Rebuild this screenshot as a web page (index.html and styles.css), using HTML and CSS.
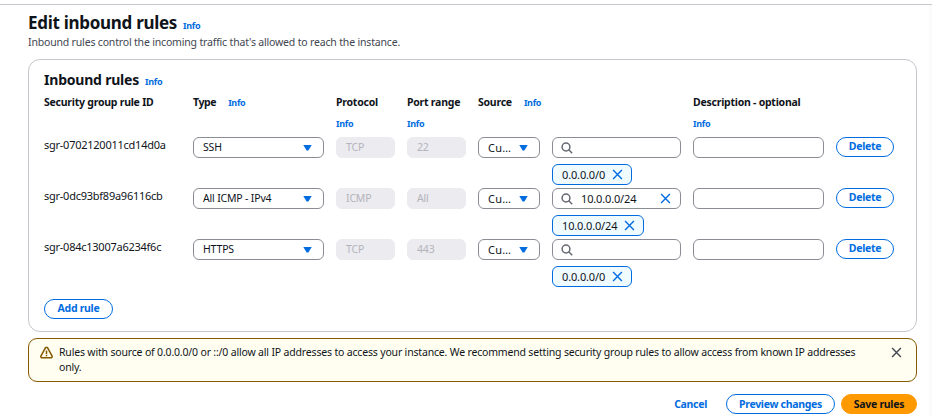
FILE: index.html
```html
<!DOCTYPE html>
<html lang="en">
<head>
<meta charset="utf-8">
<title>Edit inbound rules</title>
<link rel="stylesheet" href="styles.css">
</head>
<body>
<svg class="defs" aria-hidden="true">
  <symbol id="search" viewBox="0 0 12 12"><circle cx="5" cy="5" r="3.9"/><path d="M7.8 7.8 11.2 11.2"/></symbol>
  <symbol id="close" viewBox="0 0 12 12"><path d="M1.2 1.2 10.8 10.8M10.8 1.2 1.2 10.8"/></symbol>
  <symbol id="warn" viewBox="0 0 12 12"><path d="M5.2 1.3H6.8L11.3 9.6 10.8 10.9H1.2L.7 9.6Z"/><path d="M6 4.2V7.3M6 8.1V9.4"/></symbol>
</svg>
<main class="page">
  <header class="page-head">
    <div class="title"><h1>Edit inbound rules</h1><a class="info">Info</a></div>
    <p>Inbound rules control the incoming traffic that's allowed to reach the instance.</p>
  </header>
  <section class="panel">
    <div class="title"><h2>Inbound rules</h2><a class="info">Info</a></div>
    <div class="grid heads">
      <div class="head"><b>Security group rule ID</b></div>
      <div class="head"><b class="type">Type</b><a class="info">Info</a></div>
      <div class="head"><b>Protocol</b><a class="info">Info</a></div>
      <div class="head"><b>Port range</b><a class="info">Info</a></div>
      <div class="head wide"><b>Source</b><a class="info">Info</a></div>
      <div class="head"><b class="desc">Description - optional</b><a class="info">Info</a></div>
    </div>
    <div class="grid rule">
      <span class="id">sgr-0702120011cd14d0a</span>
      <div class="field select"><span>SSH</span><i class="caret"></i></div>
      <div class="field off">TCP</div>
      <div class="field off">22</div>
      <div class="field select"><span class="cut">Cu…</span><i class="caret"></i></div>
      <div class="source">
        <div class="field search"><svg class="lens"><use href="#search"/></svg></div>
        <div class="token"><span class="ip">0.0.0.0/0</span><svg class="x"><use href="#close"/></svg></div>
      </div>
      <div class="field"></div>
      <button class="btn">Delete</button>
    </div>
    <div class="grid rule">
      <span class="id">sgr-0dc93bf89a96116cb</span>
      <div class="field select"><span>All ICMP - IPv4</span><i class="caret"></i></div>
      <div class="field off">ICMP</div>
      <div class="field off">All</div>
      <div class="field select"><span class="cut">Cu…</span><i class="caret"></i></div>
      <div class="source">
        <div class="field search"><svg class="lens"><use href="#search"/></svg><span class="ip">10.0.0.0/24</span><svg class="x"><use href="#close"/></svg></div>
        <div class="token"><span class="ip">10.0.0.0/24</span><svg class="x"><use href="#close"/></svg></div>
      </div>
      <div class="field"></div>
      <button class="btn">Delete</button>
    </div>
    <div class="grid rule">
      <span class="id">sgr-084c13007a6234f6c</span>
      <div class="field select"><span>HTTPS</span><i class="caret"></i></div>
      <div class="field off">TCP</div>
      <div class="field off">443</div>
      <div class="field select"><span class="cut">Cu…</span><i class="caret"></i></div>
      <div class="source">
        <div class="field search"><svg class="lens"><use href="#search"/></svg></div>
        <div class="token"><span class="ip">0.0.0.0/0</span><svg class="x"><use href="#close"/></svg></div>
      </div>
      <div class="field"></div>
      <button class="btn">Delete</button>
    </div>
    <button class="btn add">Add rule</button>
  </section>
  <div class="alert">
    <svg class="warn"><use href="#warn"/></svg>
    <p>Rules with source of 0.0.0.0/0 or ::/0 allow all IP addresses to access your instance. We recommend setting security group rules to allow access from known IP addresses<br>only.</p>
    <svg class="x dismiss"><use href="#close"/></svg>
  </div>
  <footer>
    <button class="btn link">Cancel</button>
    <button class="btn preview">Preview changes</button>
    <button class="btn save">Save rules</button>
  </footer>
</main>
</body>
</html>
```
FILE: styles.css
```css
* { box-sizing: border-box; }
body {
  margin: 0;
  background: #fff;
  color: #0f141a;
  font: 10.5px/15px "Noto Sans", sans-serif;
  letter-spacing: -0.175px;
  overflow: hidden;
}
h1, h2, p { margin: 0; }
.defs { display: none; }
svg { fill: none; stroke: currentColor; flex: none; }
.page {
  margin-top: 4px;
  height: 412px;
  padding: 6px 15px 0 28px;
  border-top: 1px solid #c6c6cd;
  background: linear-gradient(#fbfbfb, #fbfbfb) right / 3px 100% no-repeat;
}
.title { display: flex; align-items: baseline; gap: 6px; }
h1 { font-size: 17px; line-height: 24px; letter-spacing: -0.29px; }
h2 { font-size: 14px; line-height: 20px; letter-spacing: -0.21px; }
.info { color: #006ce0; font-size: 9px; line-height: 15px; font-weight: 700; letter-spacing: -0.3px; }
.page-head p { color: #424650; }
.panel {
  width: 889px;
  height: 273px;
  margin-top: 9px;
  padding: 10px 15px 0;
  border: 1px solid #c6c6cd;
  border-radius: 12px;
}
.grid {
  display: grid;
  grid-template-columns: 137px 131px 59px 59px 62px 129px 131px 58px;
  column-gap: 12px;
  align-items: start;
}
.heads { height: 47px; padding-top: 5px; }
.head { display: flex; flex-wrap: wrap; column-gap: 12px; row-gap: 6px; align-items: baseline; align-content: start; }
.head b { letter-spacing: -0.24px; white-space: nowrap; }
.head .type { letter-spacing: -0.4px; }
.wide { grid-column: span 2; }
.rule { height: 51px; }
.id { font-size: 11px; letter-spacing: -0.25px; line-height: 16px; }
.field {
  height: 21px;
  padding: 0 9px;
  border: 1px solid #8c8c94;
  border-radius: 6px;
  display: flex;
  align-items: center;
  white-space: nowrap;
}
.select { justify-content: space-between; padding-right: 11px; }
.cut { font-size: 11px; letter-spacing: 0.25px; }
.caret { width: 9px; height: 6px; background: #006ce0; clip-path: polygon(0 0, 100% 0, 60% 100%, 40% 100%); }
.off { background: #ebebf0; border-color: #ebebf0; color: #b4b4bb; }
.source { display: flex; flex-direction: column; align-items: flex-start; gap: 6px; }
.search { width: 129px; padding: 0 9px 0 8px; }
.search .ip { margin-left: 8px; }
.search .x { margin-left: auto; }
.lens { width: 12px; height: 12px; color: #656871; stroke-width: 1.5; }
.ip { font-size: 11px; letter-spacing: -0.15px; }
.x { width: 11px; height: 11px; color: #006ce0; stroke-width: 1.5; }
.token {
  height: 21px;
  padding: 0 8px 1px 9px;
  border: 1px solid #006ce0;
  border-radius: 6px;
  background: #f0fbff;
  display: flex;
  align-items: center;
  gap: 7px;
}
.btn {
  height: 20px;
  padding: 0 0 1px;
  border: 1px solid #006ce0;
  border-radius: 10px;
  background: #fff;
  color: #006ce0;
  font: 700 10.5px/15px "Noto Sans", sans-serif;
  letter-spacing: -0.3px;
  white-space: nowrap;
}
.add { width: 69px; margin-top: 9px; display: block; }
.alert {
  width: 889px;
  height: 44px;
  margin-top: 6px;
  padding: 6px 14px 0 11px;
  border: 1px solid #855900;
  border-radius: 9px;
  background: #fffef0;
  display: flex;
}
.warn { width: 13px; height: 13px; margin: 1px 6px 0 0; color: #855900; stroke-width: 1.4; stroke-linejoin: round; }
.alert p { white-space: nowrap; }
.dismiss { margin: 2px 0 0 auto; color: #424650; }
footer { display: flex; justify-content: flex-end; width: 889px; margin-top: 12px; }
footer .btn { padding: 1px 0 0; }
.link { border: 0; }
.preview { width: 109px; margin-left: 19px; }
.save { width: 76px; margin-left: 6px; border-color: #ff9900; background: #ff9900; color: #0f141a; }
```
